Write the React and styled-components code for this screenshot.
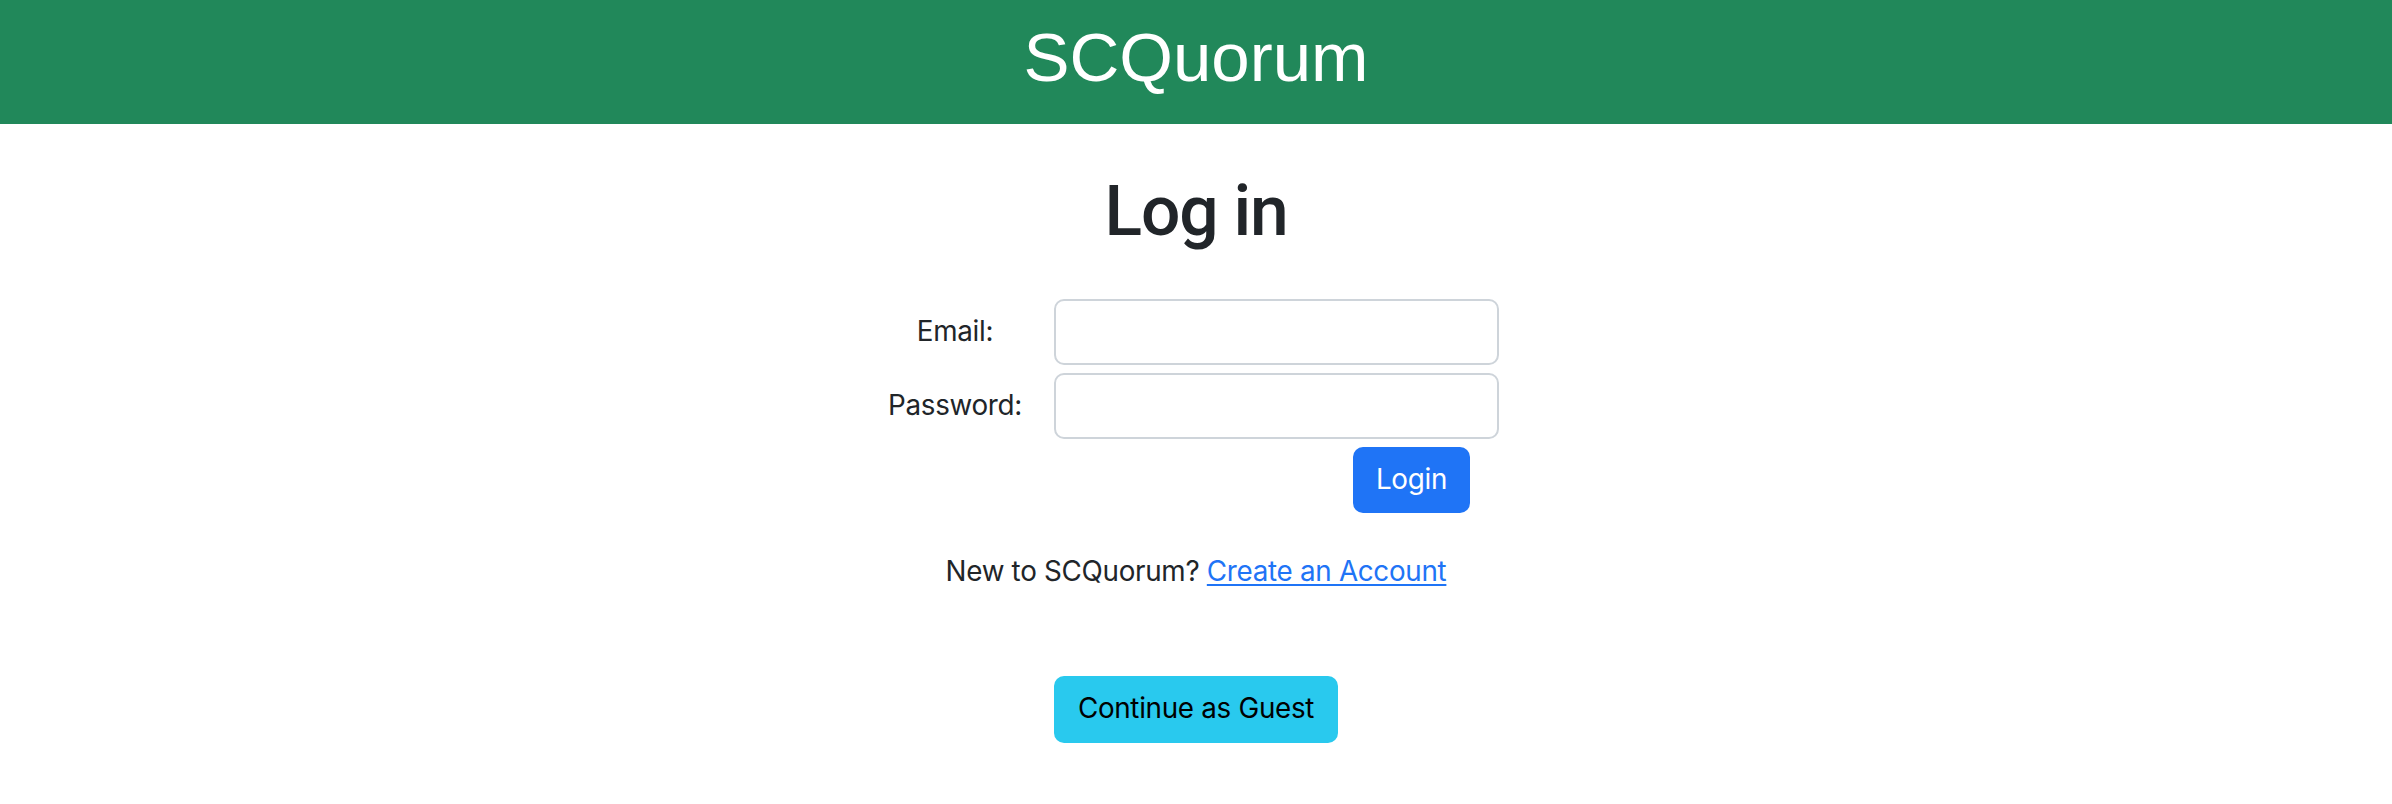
import React from "react";
import styled, { createGlobalStyle } from "styled-components";

const GlobalStyle = createGlobalStyle`
  html, body {
    margin: 0;
    padding: 0;
    background: #ffffff;
  }
  body {
    font-family: Inter, Roboto, "Liberation Sans", Arial, sans-serif;
    color: #212529;
    letter-spacing: -0.3px;
  }
  * { box-sizing: border-box; }
`;

const Header = styled.header`
  background: #21885a;
  height: 124px;
  padding-top: 19px;
  text-align: center;
`;

const Brand = styled.h1`
  margin: 0;
  font-family: "Liberation Sans", Arial, sans-serif;
  font-weight: 400;
  font-size: 69px;
  line-height: 78px;
  letter-spacing: 0;
  color: #ffffff;
`;

const Main = styled.main`
  display: flex;
  flex-direction: column;
  align-items: center;
`;

const Title = styled.h1`
  margin: 46px 0 0;
  font-family: Roboto, "Liberation Sans", Arial, sans-serif;
  font-weight: 500;
  font-size: 69.5px;
  line-height: 83px;
  letter-spacing: -1.2px;
  color: #212529;
`;

const Form = styled.form`
  margin-top: 46px;
  display: grid;
  grid-template-columns: 150px 445px;
  column-gap: 24px;
  row-gap: 8px;
  padding-right: 13px;
`;

const Label = styled.label`
  align-self: center;
  text-align: center;
  font-size: 27.8px;
  line-height: 41.7px;
  color: #212529;
`;

const Input = styled.input`
  height: 66px;
  width: 445px;
  border: 2px solid #ced4da;
  border-radius: 10px;
  padding: 0 20px;
  font-family: inherit;
  font-size: 27.8px;
  color: #212529;
  background: #ffffff;
  outline: none;
`;

const Button = styled.button`
  display: flex;
  align-items: center;
  justify-content: center;
  height: ${(p) => p.$h || 66}px;
  width: ${(p) => p.$w}px;
  border: none;
  border-radius: 10px;
  background: ${(p) => p.$bg};
  color: ${(p) => p.$fg};
  font-family: Inter, Roboto, "Liberation Sans", Arial, sans-serif;
  font-size: 27.8px;
  line-height: 41.7px;
  letter-spacing: -0.3px;
  padding: 0;
  cursor: pointer;
`;

const SubmitCell = styled.div`
  grid-column: 2;
  display: flex;
  justify-content: flex-end;
  padding-right: 29px;
`;

const Prompt = styled.p`
  margin: 38px 0 0;
  font-size: 27.8px;
  line-height: 41.7px;
  color: #212529;
`;

const Link = styled.a`
  color: #1f74f6;
  text-decoration: underline;
  text-decoration-thickness: 2px;
  text-underline-offset: 3px;
`;

const GuestWrap = styled.div`
  margin-top: 83px;
`;

export default function App() {
  return (
    <>
      <GlobalStyle />
      <Header>
        <Brand>SCQuorum</Brand>
      </Header>
      <Main>
        <Title>Log in</Title>
        <Form onSubmit={(e) => e.preventDefault()}>
          <Label htmlFor="email">Email:</Label>
          <Input id="email" type="email" />
          <Label htmlFor="password">Password:</Label>
          <Input id="password" type="password" />
          <SubmitCell>
            <Button type="submit" $w={117} $bg="#1f74f6" $fg="#ffffff">
              Login
            </Button>
          </SubmitCell>
        </Form>
        <Prompt>
          New to SCQuorum? <Link href="#">Create an Account</Link>
        </Prompt>
        <GuestWrap>
          <Button type="button" $w={284} $h={67} $bg="#29c9ee" $fg="#000000">
            Continue as Guest
          </Button>
        </GuestWrap>
      </Main>
    </>
  );
}
